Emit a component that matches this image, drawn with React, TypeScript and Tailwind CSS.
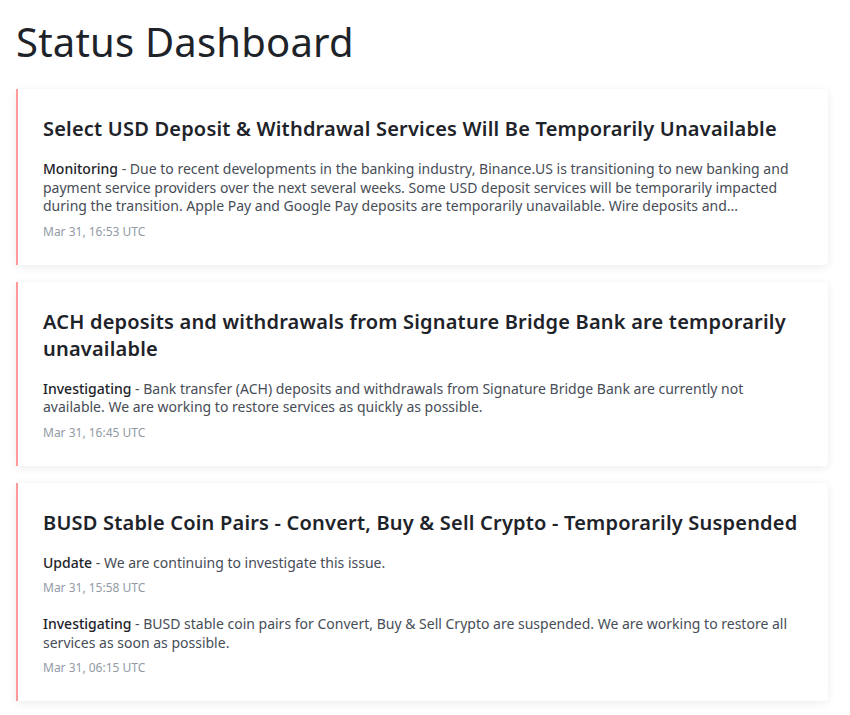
const incidents = [
  {
    title: "Select USD Deposit & Withdrawal Services Will Be Temporarily Unavailable",
    updates: [
      {
        status: "Monitoring",
        body: "Due to recent developments in the banking industry, Binance.US is transitioning to new banking and payment service providers over the next several weeks. Some USD deposit services will be temporarily impacted during the transition. Apple Pay and Google Pay deposits are temporarily unavailable. Wire deposits and...",
        time: "Mar 31, 16:53 UTC",
      },
    ],
  },
  {
    title: "ACH deposits and withdrawals from Signature Bridge Bank are temporarily unavailable",
    updates: [
      {
        status: "Investigating",
        body: "Bank transfer (ACH) deposits and withdrawals from Signature Bridge Bank are currently not available. We are working to restore services as quickly as possible.",
        time: "Mar 31, 16:45 UTC",
      },
    ],
  },
  {
    title: "BUSD Stable Coin Pairs - Convert, Buy & Sell Crypto - Temporarily Suspended",
    updates: [
      {
        status: "Update",
        body: "We are continuing to investigate this issue.",
        time: "Mar 31, 15:58 UTC",
      },
      {
        status: "Investigating",
        body: "BUSD stable coin pairs for Convert, Buy & Sell Crypto are suspended. We are working to restore all services as soon as possible.",
        time: "Mar 31, 06:15 UTC",
      },
    ],
  },
];

export default function App() {
  return (
    <div className="min-h-screen bg-white px-4 pt-[14px] font-['Noto_Sans',sans-serif] text-[#1e2329]">
      <h1 className="text-[40px] leading-[56px] font-normal tracking-[0.2px]">Status Dashboard</h1>
      <div className="mt-[19px] flex w-[812px] flex-col gap-[17px]">
        {incidents.map((incident) => (
          <div
            key={incident.title}
            className="rounded-r-[4px] border-l-2 border-[#ff9a9a] bg-white pt-[26px] pr-[27px] pb-[25px] pl-[25px] shadow-[0_2px_10px_rgba(0,0,0,0.08)]"
          >
            <h2 className="mb-[18px] text-[20px] leading-[27px] font-semibold tracking-[0.2px] text-[#1e2329]">
              {incident.title}
            </h2>
            <div className="flex flex-col gap-[19px]">
              {incident.updates.map((u) => (
                <div key={u.time}>
                  <p className="text-[14px] leading-[18.5px] text-[#474d57]">
                    <span className="font-medium text-[#1e2329]">{u.status}</span> - {u.body}
                  </p>
                  <p className="mt-2 text-[12px] leading-[16px] text-[#929aa5]">{u.time}</p>
                </div>
              ))}
            </div>
          </div>
        ))}
      </div>
    </div>
  );
}
